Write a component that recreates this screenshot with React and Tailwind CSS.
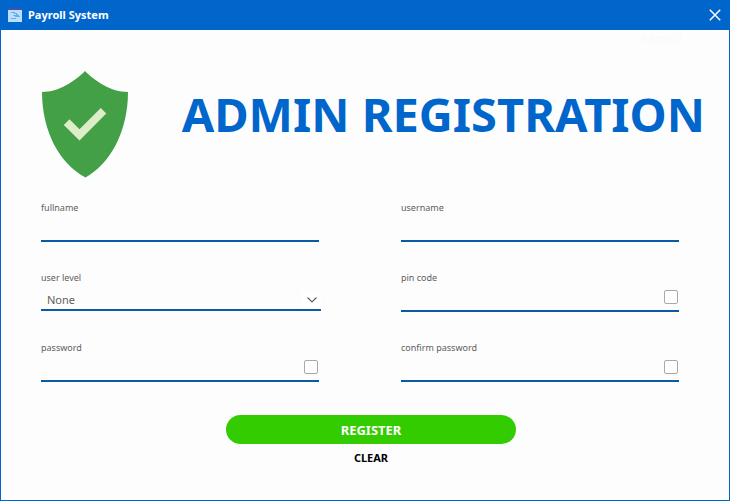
import React from "react";

function AppIcon() {
  return (
    <svg className="h-[14px] w-[14px]" viewBox="0 0 14 14" aria-hidden="true" shapeRendering="crispEdges">
      <rect width="14" height="14" fill="#bbdefb" />
      <rect width="14" height="2" fill="#3f51b5" />
      <path d="M3 4h4v1h2v1h1v1h1v1h1v1H7V8H5V7h3V6H6V5H3z" fill="#64b0ee" />
      <rect x="3" y="10" width="5" height="1" fill="#64b0ee" />
    </svg>
  );
}

function ShieldIcon() {
  return (
    <svg className="h-[107px] w-[86px] shrink-0" viewBox="0 0 86 107" aria-hidden="true">
      <path d="M43 0C53 10 69 21 86 21C86 61 68 93 43.500 106.500C18 93 0 61 0 21C17 21 33 10 43 0Z" fill="#43a047" />
      <path d="M27.500 48.200L37.500 58.200L58.800 37L64.300 42.500L37.500 69.500L21.800 54Z" fill="#dcedc8" />
    </svg>
  );
}

function TitleBar() {
  return (
    <header className="flex h-[29px] items-center bg-[#0066cc] pr-2 pb-px pl-[7px] text-white">
      <AppIcon />
      <span className="ml-[6px] flex-1 text-[11px] leading-4 font-bold">Payroll System</span>
      <button type="button" aria-label="Close" className="p-0">
        <svg className="h-3 w-3" viewBox="0 0 12 12" fill="none" stroke="currentColor" strokeWidth="1.5" aria-hidden="true">
          <path d="M0.800 0.800L11.200 11.200M11.200 0.800L0.800 11.200" />
        </svg>
      </button>
    </header>
  );
}

function Field({ id, label, type = "text", reveal = false }) {
  return (
    <div className="flex h-[43px] flex-col">
      <label htmlFor={id} className="text-[9px] leading-[18px] text-[#606060]">{label}</label>
      <div className="flex flex-1 items-start border-b-2 border-[#0b5aa5]">
        <input id={id} type={type} className="h-full min-w-0 flex-1 bg-transparent px-1 text-[11px] outline-none" />
        {reveal && (
          <input
            type="checkbox"
            aria-label={"Show " + label}
            className="mt-[3px] mr-px h-[14px] w-[14px] appearance-none rounded-xs border border-[#a8a8a8] bg-white checked:bg-[#0b5aa5]"
          />
        )}
      </div>
    </div>
  );
}

function SelectField({ id, label }) {
  return (
    <div className="-mr-[2px] flex h-[42px] flex-col">
      <label htmlFor={id} className="text-[9px] leading-[18px] text-[#606060]">{label}</label>
      <div className="relative flex-1 border-b-2 border-[#0b5aa5]">
        <select id={id} className="block h-full w-full appearance-none bg-transparent pt-1 pl-[6px] text-[11px] leading-4 text-[#606060] outline-none">
          <option>None</option>
          <option>Admin</option>
        </select>
        <span className="pointer-events-none absolute top-1 right-0 flex h-[18px] w-[19px] items-center justify-center bg-white">
          <svg className="h-[6px] w-[10px]" viewBox="0 0 10 6" fill="none" stroke="#606060" strokeWidth="1.200" aria-hidden="true">
            <path d="M0.500 0.500L5 5L9.500 0.500" />
          </svg>
        </span>
      </div>
    </div>
  );
}

export default function App() {
  return (
    <div className="flex min-h-screen flex-col border border-[#0066cc] bg-[#fdfdfd] font-['Noto_Sans','Open_Sans',sans-serif]">
      <TitleBar />
      <main className="flex-1">
        <p className="pt-px pr-[46px] text-right text-[12px] leading-4 text-[#fafafa]">Admin2</p>
        <div className="flex items-start justify-between pt-6 pr-6 pl-[41px]">
          <ShieldIcon />
          <h1 className="pt-3 text-[47px] leading-[62px] font-bold whitespace-nowrap text-[#0066cc]">ADMIN REGISTRATION</h1>
        </div>
        <form className="pt-[21px]">
          <div className="grid grid-cols-2 gap-x-[82px] gap-y-[27px] pr-[50px] pl-10">
            <Field id="fullname" label="fullname" />
            <Field id="username" label="username" />
            <SelectField id="level" label="user level" />
            <Field id="pin" label="pin code" type="password" reveal />
            <Field id="password" label="password" type="password" reveal />
            <Field id="confirm" label="confirm password" type="password" reveal />
          </div>
          <div className="flex flex-col items-center pt-[33px] pl-3">
            <button type="button" className="h-[29px] w-[290px] rounded-full bg-[#33cc00] text-[13px] leading-4 font-bold text-white">REGISTER</button>
            <button type="reset" className="mt-[6px] text-[11px] leading-4 font-bold text-black">CLEAR</button>
          </div>
        </form>
      </main>
    </div>
  );
}
